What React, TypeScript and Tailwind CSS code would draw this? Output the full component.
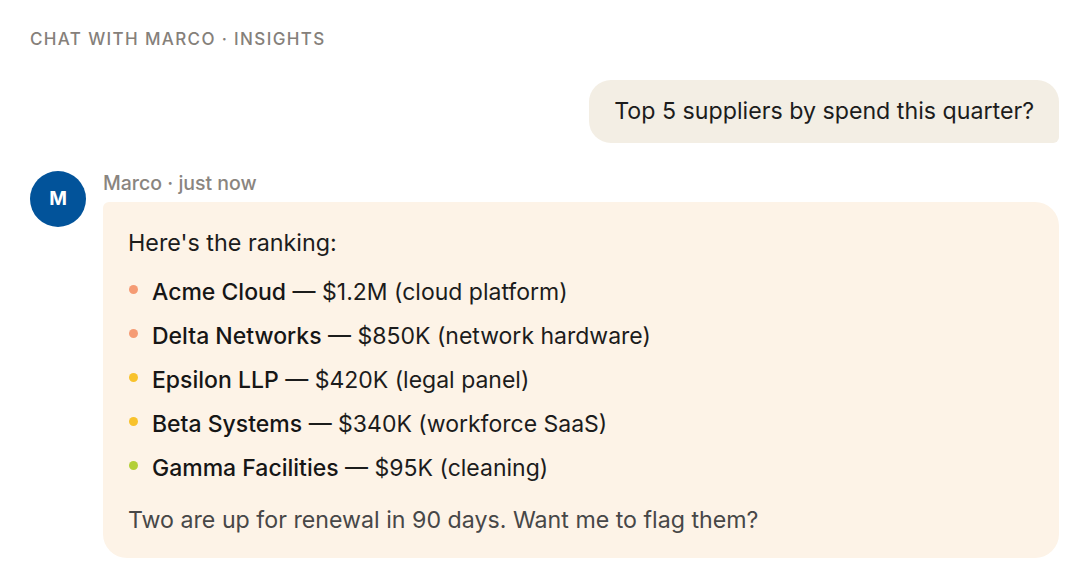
import React from "react";

const suppliers = [
  { name: "Acme Cloud", spend: "$1.2M", note: "cloud platform", dot: "bg-[#f59b74]" },
  { name: "Delta Networks", spend: "$850K", note: "network hardware", dot: "bg-[#f59b74]" },
  { name: "Epsilon LLP", spend: "$420K", note: "legal panel", dot: "bg-[#f8c22c]" },
  { name: "Beta Systems", spend: "$340K", note: "workforce SaaS", dot: "bg-[#f8c22c]" },
  { name: "Gamma Facilities", spend: "$95K", note: "cleaning", dot: "bg-[#b3cf37]" },
];

export default function App() {
  return (
    <div className="min-h-screen bg-white px-[30px] pt-[28px] text-[#1c1c1c] [font-family:Inter,'Noto_Sans',sans-serif]">
      <div className="text-[17px] font-medium uppercase leading-[22px] tracking-[0.08em] text-[#85807a]">
        Chat with Marco · Insights
      </div>

      <div className="mt-[30px] flex justify-end">
        <div className="mr-[-2px] rounded-[22px] rounded-br-[6px] bg-[#f3eee4] px-[25px] py-[17px] text-[23.2px] leading-[29px]">
          Top 5 suppliers by spend this quarter?
        </div>
      </div>

      <div className="mt-[28px] flex gap-[17px]">
        <div className="flex h-[56px] w-[56px] shrink-0 items-center justify-center rounded-full bg-[#02539a] text-[19px] font-bold text-white">
          M
        </div>
        <div className="mr-[-2px] flex-1">
          <div className="text-[19.5px] font-medium leading-[24px] text-[#8a8580]">
            Marco · just now
          </div>
          <div className="mt-[7px] rounded-[24px] rounded-tl-[6px] bg-[#fdf3e7] px-[25px] pb-[23px] pt-[26px] text-[23px] leading-[29px]">
            <p className="text-[23.3px]">Here's the ranking:</p>
            <ul className="mt-[21px] flex flex-col gap-[15px]">
              {suppliers.map((s) => (
                <li key={s.name} className="flex items-center">
                  <span className={`ml-[1px] mr-[14px] h-[9px] w-[9px] shrink-0 rounded-full ${s.dot} -translate-y-[3px]`} />
                  <span>
                    <span className="font-medium text-[#161616]">{s.name}</span> — {s.spend} ({s.note})
                  </span>
                </li>
              ))}
            </ul>
            <p className="mt-[23px] text-[23.2px] text-[#474747]">
              Two are up for renewal in 90 days. Want me to flag them?
            </p>
          </div>
        </div>
      </div>
    </div>
  );
}
